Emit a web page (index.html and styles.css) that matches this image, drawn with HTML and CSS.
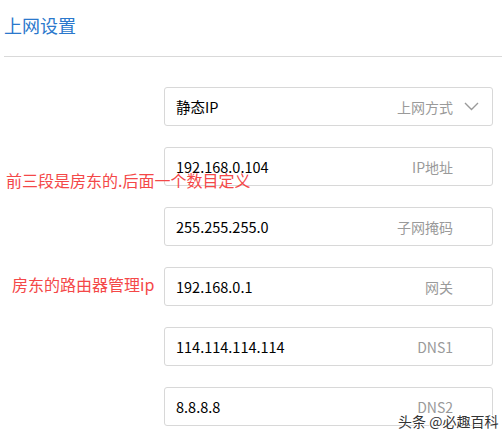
FILE: index.html
```html
<!DOCTYPE html>
<html lang="zh-CN">
<head>
  <meta charset="UTF-8">
  <meta name="viewport" content="width=device-width, initial-scale=1.0">
  <title>上网设置</title>
  <link rel="stylesheet" href="styles.css">
</head>
<body>
  <div id="app">
    <div class="header">
      <h1 class="title">上网设置</h1>
    </div>

    <div class="form">
      <div class="field field-select">
        <span class="value">静态IP</span>
        <span class="label">上网方式</span>
        <svg class="arrow" width="15" height="9" viewBox="0 0 15 9">
          <path d="M1 1 L7.5 7.5 L14 1" fill="none" stroke="#9a9a9a" stroke-width="1.4"/>
        </svg>
      </div>
      <div class="field">
        <span class="value">192.168.0.104</span>
        <span class="label">IP地址</span>
      </div>
      <div class="field">
        <span class="value">255.255.255.0</span>
        <span class="label">子网掩码</span>
      </div>
      <div class="field">
        <span class="value">192.168.0.1</span>
        <span class="label">网关</span>
      </div>
      <div class="field">
        <span class="value">114.114.114.114</span>
        <span class="label">DNS1</span>
      </div>
      <div class="field">
        <span class="value">8.8.8.8</span>
        <span class="label">DNS2</span>
      </div>
    </div>

    <!-- hand written notes on top of the form -->
    <div class="note note-ip">前三段是房东的.后面一个数目定义</div>
    <div class="note note-gateway">房东的路由器管理ip</div>

    <div class="mark">头条 @必趣百科</div>
  </div>
</body>
</html>
```

FILE: styles.css
```css
* {
  box-sizing: border-box;
}

body {
  margin: 0;
  background: #fff;
  font-family: "Microsoft YaHei", "Noto Sans CJK SC", "Noto Sans", sans-serif;
}

#app {
  position: relative;
  width: 502px;
  height: 438px;
  overflow: hidden;
}

.header {
  margin-left: 4px;
  height: 57px;
  padding-top: 13px;
  border-bottom: 1px solid #d9d9d9;
}

.title {
  margin: 0;
  font-size: 18px;
  font-weight: normal;
  line-height: 24px;
  color: #2b78cc;
}

.form {
  display: flex;
  flex-direction: column;
  gap: 21px;
  width: 329px;
  margin: 30px 0 0 164px;
}

.field {
  display: flex;
  align-items: center;
  height: 39px;
  padding: 0 39px 0 11px;
  border: 1px solid #d8d8d8;
  border-radius: 3px;
}

.field-select {
  padding-right: 13px;
}

.value {
  flex: 1;
  font-size: 14.5px;
  color: #000;
}

.label {
  font-size: 14px;
  color: #9a9a9a;
}

.arrow {
  margin-left: 11px;
}

.note {
  position: absolute;
  font-size: 16px;
  line-height: 20px;
  color: #f44848;
}

.note-ip {
  left: 6px;
  top: 170px;
}

.note-gateway {
  left: 12px;
  top: 274px;
}

.mark {
  position: absolute;
  left: 398px;
  top: 412px;
  font-size: 14px;
  line-height: 18px;
  color: #333;
  text-shadow: 1px 0 0 #fff, -1px 0 0 #fff, 0 1px 0 #fff, 0 -1px 0 #fff;
}
```
